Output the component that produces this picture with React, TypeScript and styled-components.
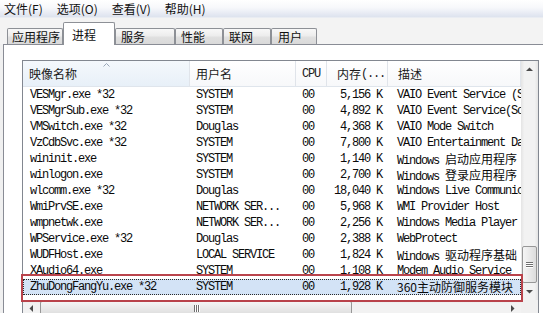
import styled, { createGlobalStyle } from "styled-components"

const MONO = `"Liberation Mono", "DejaVu Sans Mono", monospace`
const CJK = `"Noto Sans CJK SC", "Noto Sans", sans-serif`

const GlobalStyle = createGlobalStyle`
  html, body {
    margin: 0;
    padding: 0;
    background: #f0f0f0;
    overflow: hidden;
  }
  body {
    font-family: ${CJK};
    color: #000;
  }
`

type Col = { w: number; pad: number; headPad: number; right?: boolean }

const cols: Col[] = [
    { w: 167, pad: 7, headPad: 6 },
    { w: 106, pad: 6, headPad: 6 },
    { w: 31, pad: 6, headPad: 6 },
    { w: 61, pad: 6, headPad: 10, right: true },
    { w: 133, pad: 9, headPad: 10 },
]

const menus = ["文件(F)", "选项(O)", "查看(V)", "帮助(H)"]

const tabs = [
    { label: "应用程序", w: 56, pad: 4 },
    { label: "进程", w: 52, pad: 8, active: true },
    { label: "服务", w: 60, pad: 5 },
    { label: "性能", w: 48, pad: 5 },
    { label: "联网", w: 48, pad: 5 },
    { label: "用户", w: 46, pad: 6 },
]

const processes = [
    ["VESMgr.exe *32", "SYSTEM", "00", "5,156 K", "VAIO Event Service (Sony)"],
    ["VESMgrSub.exe *32", "SYSTEM", "00", "4,892 K", "VAIO Event Service(Sony)"],
    ["VMSwitch.exe *32", "Douglas", "00", "4,368 K", "VAIO Mode Switch"],
    ["VzCdbSvc.exe *32", "SYSTEM", "00", "7,800 K", "VAIO Entertainment Database"],
    ["wininit.exe", "SYSTEM", "00", "1,140 K", "Windows 启动应用程序"],
    ["winlogon.exe", "SYSTEM", "00", "2,700 K", "Windows 登录应用程序"],
    ["wlcomm.exe *32", "Douglas", "00", "18,040 K", "Windows Live Communications"],
    ["WmiPrvSE.exe", "NETWORK SER...", "00", "5,968 K", "WMI Provider Host"],
    ["wmpnetwk.exe", "NETWORK SER...", "00", "2,256 K", "Windows Media Player Network"],
    ["WPService.exe *32", "Douglas", "00", "2,388 K", "WebProtect"],
    ["WUDFHost.exe", "LOCAL SERVICE", "00", "1,824 K", "Windows 驱动程序基础"],
    ["XAudio64.exe", "SYSTEM", "00", "1,108 K", "Modem Audio Service"],
    ["ZhuDongFangYu.exe *32", "SYSTEM", "00", "1,928 K", "360主动防御服务模块"],
]

// wrap chinese runs so they get the CJK face at full width
function mixed(text: string) {
    return text.split(/([0-9]*[\u4e00-\u9fff]+)/).map((part, i) =>
        /[\u4e00-\u9fff]/.test(part) ? <Cjk key={i}>{part}</Cjk> : part
    )
}

function Arrow(props: { dir: "up" | "down" | "left" | "right" }) {
    const rot = { up: 0, right: 90, down: 180, left: 270 }[props.dir]
    return (
        <svg width="7" height="7" viewBox="0 0 7 7" style={{ transform: `rotate(${rot}deg)` }}>
            <path d="M0 5 L3.5 1.5 L7 5 Z" fill="#4a4a4a" />
        </svg>
    )
}

export default function App() {
    const lastRow = processes.length - 1
    return (
        <Window>
            <GlobalStyle />
            <MenuBar>
                {menus.map(m => <MenuItem key={m}>{m}</MenuItem>)}
            </MenuBar>
            <TabStrip>
                {tabs.map(t => (
                    <Tab key={t.label} $w={t.w} $pad={t.pad} $active={!!t.active}>{t.label}</Tab>
                ))}
            </TabStrip>
            <Page>
                <ListBox>
                    <Content>
                        <HeaderRow>
                            <HeaderCell $col={cols[0]} $sorted>
                                <SortMark width="7" height="4" viewBox="0 0 7 4">
                                    <path d="M0.5 3.5 L3.5 0.5 L6.5 3.5" stroke="#9aa7b8" fill="none" />
                                </SortMark>
                                映像名称
                            </HeaderCell>
                            <HeaderCell $col={cols[1]}>用户名</HeaderCell>
                            <HeaderCell $col={cols[2]}><Mono>CPU</Mono></HeaderCell>
                            <HeaderCell $col={cols[3]}>内存<Mono>(...</Mono></HeaderCell>
                            <HeaderCell $col={cols[4]}>描述</HeaderCell>
                        </HeaderRow>
                        {processes.map((p, i) => (
                            <Row key={p[0]} $selected={i === lastRow}>
                                {p.map((v, c) => (
                                    <Cell key={c} $col={cols[c]}>{mixed(v)}</Cell>
                                ))}
                            </Row>
                        ))}
                    </Content>
                    <VScroll>
                        <ScrollBtn><Arrow dir="up" /></ScrollBtn>
                        <Track $vertical>
                            <Thumb $vertical style={{ height: 37 }}>
                                <Grip $vertical><i /><i /><i /></Grip>
                            </Thumb>
                        </Track>
                        <ScrollBtn><Arrow dir="down" /></ScrollBtn>
                    </VScroll>
                    <HScroll>
                        <ScrollBtn><Arrow dir="left" /></ScrollBtn>
                        <Track>
                            <Thumb style={{ width: 312 }}>
                                <Grip><i /><i /><i /></Grip>
                            </Thumb>
                        </Track>
                        <ScrollBtn><Arrow dir="right" /></ScrollBtn>
                    </HScroll>
                    <Corner />
                    <Annotation />
                </ListBox>
            </Page>
        </Window>
    )
}

const Window = styled.div`
    width: 543px;
    height: 313px;
    overflow: hidden;
    display: flex;
    flex-direction: column;
    background: #f0f0f0;
    font-size: 12px;
`
const MenuBar = styled.div`
    flex: none;
    height: 17px;
    display: flex;
    align-items: center;
    gap: 14px;
    padding-left: 4px;
    background: linear-gradient(#ffffff, #f7f8fb 45%, #e4e8f2 85%, #dde3ee);
    border-bottom: 1px solid #e9ecf2;
`
const MenuItem = styled.span`
    font-family: ${CJK};
    font-size: 12px;
    line-height: 17px;
    color: #111;
`
const TabStrip = styled.div`
    flex: none;
    height: 26px;
    display: flex;
    align-items: flex-end;
    padding-left: 7px;
    background: #f3f3f3;
`
const Tab = styled.div<{ $w: number; $pad: number; $active: boolean }>`
    box-sizing: border-box;
    width: ${p => p.$w}px;
    height: ${p => (p.$active ? 23 : 16)}px;
    padding-left: ${p => p.$pad}px;
    display: flex;
    align-items: center;
    font-family: ${CJK};
    font-size: 12px;
    color: #111;
    border: 1px solid #8d9096;
    border-bottom: none;
    border-radius: 2px 2px 0 0;
    position: relative;
    z-index: ${p => (p.$active ? 1 : 0)};
    margin-bottom: ${p => (p.$active ? -1 : 0)}px;
    background: ${p => (p.$active
        ? "#ffffff"
        : "linear-gradient(#f8f8f8, #ededed 45%, #e0e0e0 55%, #d9d9d9)")};
`
const Page = styled.div`
    flex: none;
    margin-left: 3px;
    border-top: 1px solid #898c95;
    border-left: 1px solid #898c95;
    background: #ffffff;
    padding: 15px 0 0 18px;
`
const ListBox = styled.div`
    position: relative;
    width: 515px;
    display: grid;
    grid-template-columns: 498px 17px;
    grid-template-rows: 239px 17px;
    border: 1px solid #828790;
    background: #ffffff;
`
const Content = styled.div`
    overflow: hidden;
`
const HeaderRow = styled.div`
    height: 25px;
    display: flex;
    border-bottom: 1px solid #dfe5ec;
    background: linear-gradient(#ffffff, #f7f8fa);
`
const HeaderCell = styled.div<{ $col: Col; $sorted?: boolean }>`
    position: relative;
    box-sizing: border-box;
    flex: none;
    width: ${p => p.$col.w}px;
    padding-left: ${p => p.$col.headPad}px;
    display: flex;
    align-items: center;
    font-family: ${CJK};
    font-size: 12px;
    color: #1a1a1a;
    border-right: 1px solid #e0e4ea;
    background: ${p => (p.$sorted ? "linear-gradient(#f4f8fc, #e8f0f8)" : "transparent")};
`
const SortMark = styled.svg`
    position: absolute;
    top: 2px;
    left: 80px;
`
const Row = styled.div<{ $selected?: boolean }>`
    height: 16px;
    display: flex;
    background: ${p => (p.$selected ? "#d3e3f6" : "transparent")};
    outline: ${p => (p.$selected ? "1px dotted #2a2a2a" : "none")};
    outline-offset: -1px;
`
const Cell = styled.div<{ $col: Col }>`
    box-sizing: border-box;
    flex: none;
    width: ${p => p.$col.w}px;
    padding-left: ${p => (p.$col.right ? 0 : p.$col.pad)}px;
    padding-right: ${p => (p.$col.right ? p.$col.pad : 0)}px;
    text-align: ${p => (p.$col.right ? "right" : "left")};
    font-family: ${MONO};
    font-size: 12px;
    letter-spacing: -1.2px;
    line-height: 16px;
    white-space: nowrap;
    overflow: hidden;
    color: #0a0a0a;
`
const Cjk = styled.span`
    font-family: ${CJK};
    letter-spacing: 0;
`
const Mono = styled.span`
    font-family: ${MONO};
    letter-spacing: -1.2px;
`
const VScroll = styled.div`
    display: flex;
    flex-direction: column;
    background: linear-gradient(to right, #e4e4e4, #f2f2f2 20%, #f2f2f2 80%, #e4e4e4);
`
const HScroll = styled.div`
    display: flex;
    background: linear-gradient(#e4e4e4, #f2f2f2 20%, #f2f2f2 80%, #e4e4e4);
`
const ScrollBtn = styled.div`
    width: 17px;
    height: 17px;
    flex: none;
    display: flex;
    align-items: center;
    justify-content: center;
`
const Track = styled.div<{ $vertical?: boolean }>`
    flex: 1;
    display: flex;
    flex-direction: ${p => (p.$vertical ? "column" : "row")};
    justify-content: ${p => (p.$vertical ? "flex-end" : "flex-start")};
    padding: ${p => (p.$vertical ? "0 1px" : "1px 0")};
`
const Thumb = styled.div<{ $vertical?: boolean }>`
    box-sizing: border-box;
    display: flex;
    align-items: center;
    justify-content: center;
    border: 1px solid #979797;
    border-radius: 2px;
    background: ${p => (p.$vertical
        ? "linear-gradient(to right, #f5f5f5, #e9e9e9 50%, #dcdcdc)"
        : "linear-gradient(#f5f5f5, #e9e9e9 50%, #dcdcdc)")};
`
const Grip = styled.div<{ $vertical?: boolean }>`
    display: flex;
    flex-direction: ${p => (p.$vertical ? "column" : "row")};
    gap: 1px;
    i {
        display: block;
        background: #6f6f6f;
        width: ${p => (p.$vertical ? 7 : 1)}px;
        height: ${p => (p.$vertical ? 1 : 7)}px;
        box-shadow: ${p => (p.$vertical ? "0 1px 0 #fff" : "1px 0 0 #fff")};
    }
`
const Corner = styled.div`
    background: #f0f0f0;
`
const Annotation = styled.div`
    position: absolute;
    top: 213px;
    left: -2px;
    width: 502px;
    height: 28px;
    box-sizing: border-box;
    border: 2px solid #b9434b;
    pointer-events: none;
`
